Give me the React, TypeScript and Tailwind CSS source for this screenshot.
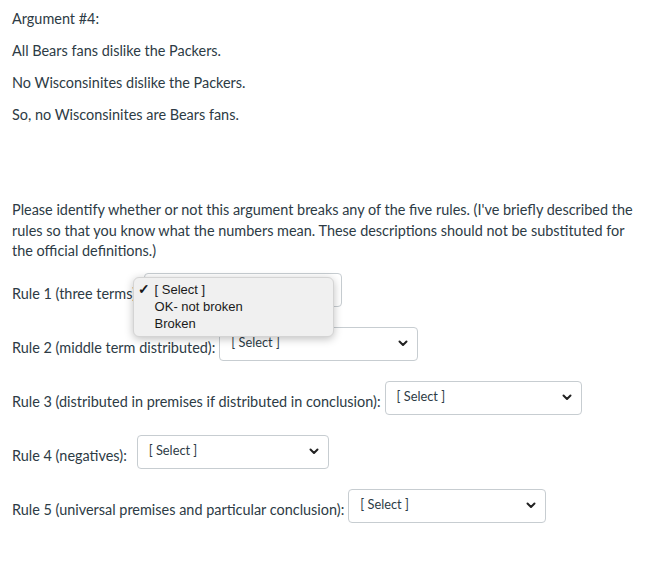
import { ReactNode } from "react";

function Chevron() {
  return (
    <svg width="10" height="7" viewBox="0 0 10 7" className="shrink-0">
      <path d="M1.5 1.5 L5 5 L8.5 1.5" fill="none" stroke="#222" strokeWidth="2" strokeLinecap="round" strokeLinejoin="round" />
    </svg>
  );
}

function FakeSelect({ width, children }: { width: string; children?: ReactNode }) {
  return (
    <div className={`relative ${width}`}>
      <div className="flex h-[34px] items-center justify-between rounded-[4px] border border-[#c7cdd1] bg-white pl-[11px] pr-[9px]">
        <span className="-mt-[3px] text-[12.8px] text-[#2d3b45]">[ Select ]</span>
        <Chevron />
      </div>
      {children}
    </div>
  );
}

function RuleRow({ label, width, gap = "ml-1", children }: { label: string; width: string; gap?: string; children?: ReactNode }) {
  return (
    <div className="mb-[20px] flex items-center">
      <span className={`mt-[8px] ${gap === "ml-1" ? "mr-1" : "mr-[10px]"}`}>{label}</span>
      <FakeSelect width={width}>{children}</FakeSelect>
    </div>
  );
}

export default function App() {
  return (
    <div
      className="min-h-[572px] bg-white px-3 pt-[8px] text-[14.45px] leading-[21px] text-[#2d3b45]"
      style={{ fontFamily: "Lato, 'Noto Sans', sans-serif" }}
    >
      <p className="mb-[11px]">Argument #4:</p>
      <p className="mb-[11px]">All Bears fans dislike the Packers.</p>
      <p className="mb-[11px]">No Wisconsinites dislike the Packers.</p>
      <p className="mb-[11px]">So, no Wisconsinites are Bears fans.</p>
      <p className="mb-[11px]">&nbsp;</p>
      <p className="mb-[11px]">&nbsp;</p>
      <p className="mb-[11px] leading-[20.5px]">
        Please identify whether or not this argument breaks any of the five rules. (I've briefly described the rules so
        that you know what the numbers mean. These descriptions should not be substituted for the official definitions.)
      </p>

      <RuleRow label="Rule 1 (three terms):" width="w-[198px]">
        <div
          className="absolute left-[-11px] top-[4px] z-10 w-[201px] rounded-[6px] border border-[#d4d4d4] bg-[#f0f0f0] pb-[4px] pt-[3px] text-[13px] leading-[17px] text-[#1a1a1a] shadow-[0_2px_8px_rgba(0,0,0,0.25)]"
          style={{ fontFamily: "'Liberation Sans', Arial, sans-serif" }}
        >
          <div className="flex items-center">
            <span className="w-[21px] pl-[4px] text-[14px] font-bold">✓</span>
            <span>[ Select ]</span>
          </div>
          <div className="pl-[21px]">OK- not broken</div>
          <div className="pl-[21px]">Broken</div>
        </div>
      </RuleRow>
      <RuleRow label="Rule 2 (middle term distributed):" width="w-[199px]" />
      <RuleRow label="Rule 3 (distributed in premises if distributed in conclusion):" width="w-[197px]" />
      <RuleRow label="Rule 4 (negatives):" width="w-[192px]" gap="wide" />
      <RuleRow label="Rule 5 (universal premises and particular conclusion):" width="w-[198px]" />
    </div>
  );
}
